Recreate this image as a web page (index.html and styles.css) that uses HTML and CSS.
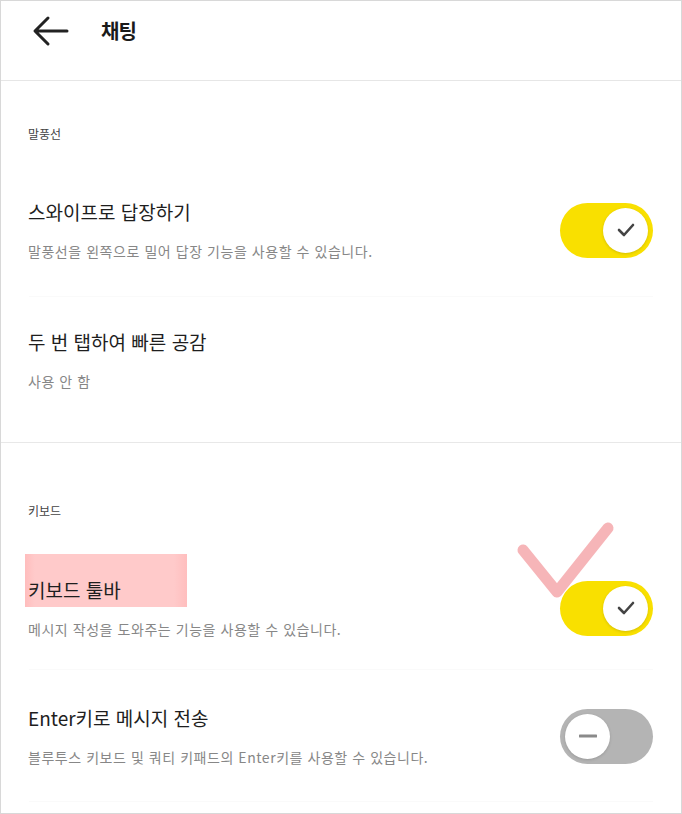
FILE: index.html
```html
<!DOCTYPE html>
<html lang="ko">
<head>
    <meta charset="UTF-8">
    <meta name="viewport" content="width=device-width, initial-scale=1.0">
    <title>채팅</title>
    <link rel="stylesheet" href="styles.css">
</head>
<body>
    <div class="frame">
        <header class="header">
            <svg class="back" width="38" height="32" viewBox="0 0 38 32">
                <path d="M35 16 H4 M16 3 L3 16 L16 29" fill="none" stroke="#222" stroke-width="3" stroke-linecap="round" stroke-linejoin="round"/>
            </svg>
            <h1 class="title">채팅</h1>
        </header>

        <section class="section sec-bubble">
            <p class="section-label">말풍선</p>

            <div class="item item-swipe">
                <div class="item-text">
                    <p class="item-title">스와이프로 답장하기</p>
                    <p class="item-desc">말풍선을 왼쪽으로 밀어 답장 기능을 사용할 수 있습니다.</p>
                </div>
                <div class="toggle on"><span class="knob">
                    <svg width="18" height="14" viewBox="0 0 18 14"><path d="M2 7 L7 12 L16 2" fill="none" stroke="#444" stroke-width="2.6" stroke-linecap="round" stroke-linejoin="round"/></svg>
                </span></div>
            </div>
            <div class="sep"></div>

            <div class="item item-tap">
                <div class="item-text">
                    <p class="item-title">두 번 탭하여 빠른 공감</p>
                    <p class="item-desc">사용 안 함</p>
                </div>
            </div>
        </section>

        <section class="section sec-keyboard">
            <p class="section-label">키보드</p>

            <div class="item item-toolbar">
                <svg class="mark" width="110" height="90" viewBox="0 0 110 90">
                    <path d="M12 34 L46 76 L97 12" fill="none" stroke="#f5adb0" stroke-opacity="0.9" stroke-width="11" stroke-linecap="round" stroke-linejoin="round"/>
                </svg>
                <div class="item-text">
                    <p class="item-title"><span class="hl">키보드 툴바</span></p>
                    <p class="item-desc">메시지 작성을 도와주는 기능을 사용할 수 있습니다.</p>
                </div>
                <div class="toggle on"><span class="knob">
                    <svg width="18" height="14" viewBox="0 0 18 14"><path d="M2 7 L7 12 L16 2" fill="none" stroke="#444" stroke-width="2.6" stroke-linecap="round" stroke-linejoin="round"/></svg>
                </span></div>
            </div>
            <div class="sep"></div>

            <div class="item item-enter">
                <div class="item-text">
                    <p class="item-title">Enter키로 메시지 전송</p>
                    <p class="item-desc">블루투스 키보드 및 쿼티 키패드의 Enter키를 사용할 수 있습니다.</p>
                </div>
                <div class="toggle off"><span class="knob">
                    <svg width="18" height="4" viewBox="0 0 18 4"><path d="M1 2 H17" stroke="#8a8a8a" stroke-width="3" stroke-linecap="round"/></svg>
                </span></div>
            </div>
            <div class="sep"></div>
        </section>
    </div>
</body>
</html>
```

FILE: styles.css
```css
* {
    margin: 0;
    padding: 0;
    box-sizing: border-box;
}
body {
    font-family: "Noto Sans CJK KR", "Noto Sans", sans-serif;
    background: #fff;
    color: #1e1e1e;
}
.frame {
    width: 682px;
    height: 814px;
    border: 1px solid #d8d8d8;
    overflow: hidden;
}
.header {
    height: 80px;
    display: flex;
    align-items: flex-start;
    padding: 14px 0 0 31px;
    border-bottom: 1px solid #e6e6e6;
}
.back {
    display: block;
}
.title {
    margin-left: 31px;
    font-size: 20px;
    line-height: 32px;
    font-weight: bold;
    letter-spacing: -1px;
    color: #1a1a1a;
}
.section-label {
    padding: 0 27px;
    font-size: 12px;
    line-height: 18px;
    color: #444;
}
.sec-bubble {
    padding-top: 44px;
    border-bottom: 1px solid #e8e8e8;
}
.sec-keyboard {
    padding-top: 59px;
}
.item {
    display: flex;
    align-items: center;
    justify-content: space-between;
    padding: 0 28px 0 27px;
    position: relative;
}
.item-title {
    font-size: 19px;
    line-height: 26px;
    color: #1e1e1e;
}
.item-desc {
    margin-top: 16px;
    font-size: 14px;
    line-height: 20px;
    letter-spacing: 0.55px;
    color: #878787;
}
.item-swipe {
    padding-top: 56px;
    padding-bottom: 35px;
}
.item-tap {
    padding-top: 32px;
    padding-bottom: 51px;
}
.item-toolbar {
    padding-top: 57px;
    padding-bottom: 30px;
}
.item-enter {
    padding-top: 35px;
    padding-bottom: 34px;
}
.sep {
    height: 1px;
    margin: 0 28px;
    background: #fafafa;
}
.hl {
    display: inline-block;
    padding: 23px 66px 4px 3px;
    margin: -23px -66px -4px -3px;
    background: linear-gradient(90deg, #ffbdbd 0, #ffcaca 6%, #ffcaca 92%, #ffbebe 100%);
}
.mark {
    position: absolute;
    left: 510px;
    top: -4px;
}
.toggle {
    width: 93px;
    height: 55px;
    border-radius: 28px;
    padding: 5px;
    display: flex;
    align-items: center;
    flex-shrink: 0;
    position: relative;
}
.toggle.on {
    background: #f9e000;
    justify-content: flex-end;
}
.toggle.off {
    background: #b4b4b4;
    justify-content: flex-start;
}
.knob {
    width: 45px;
    height: 45px;
    border-radius: 50%;
    background: #fff;
    display: flex;
    align-items: center;
    justify-content: center;
    box-shadow: 0 1px 3px rgba(0, 0, 0, 0.15);
}
```
